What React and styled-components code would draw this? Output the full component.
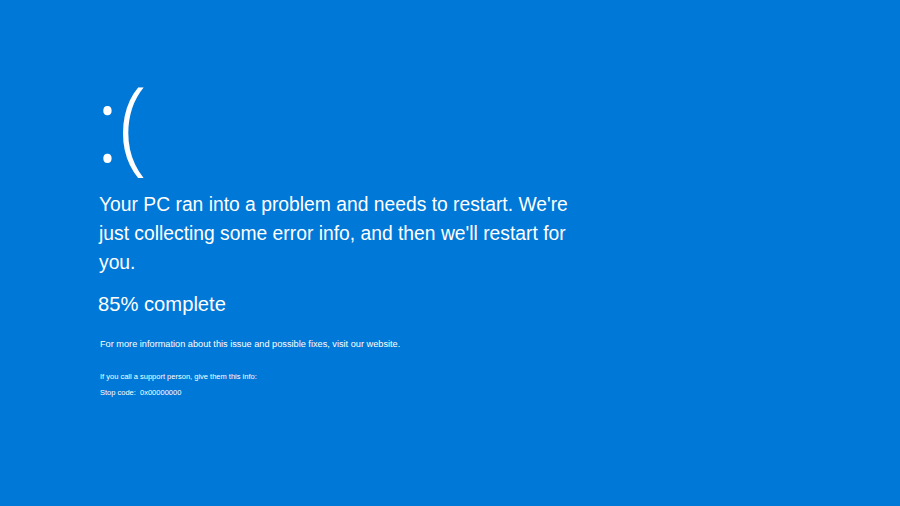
import React from "react";
import styled, { createGlobalStyle } from "styled-components";

const Global = createGlobalStyle`
  html, body {
    margin: 0;
    padding: 0;
    background: #0078d7;
  }
  body {
    font-family: "Liberation Sans", Arial, sans-serif;
    color: #ffffff;
  }
`;

const Screen = styled.main`
  width: 900px;
  height: 506px;
  background: #0078d7;
  box-sizing: border-box;
  padding: 70px 0 0 99px;
  overflow: hidden;
`;

const Face = styled.div`
  font-family: "Open Sans", "Liberation Sans", sans-serif;
  font-weight: 300;
  font-size: 104px;
  line-height: 104px;
  height: 120px;
  margin-left: -4px;
  letter-spacing: -1px;
`;

const Message = styled.p`
  margin: 0;
  width: 480px;
  font-size: 19.3px;
  line-height: 29px;
`;

const Progress = styled.p`
  margin: 14px 0 0 -1px;
  font-size: 20.2px;
  line-height: 26px;
`;

const Info = styled.p`
  margin: ${(p) => p.$top}px 0 0 1px;
  font-size: ${(p) => p.$size}px;
  line-height: ${(p) => p.$size + 4}px;
`;

const App = () => (
  <>
    <Global />
    <Screen>
      <Face>:(</Face>
      <Message>
        Your PC ran into a problem and needs to restart. We're just collecting
        some error info, and then we'll restart for you.
      </Message>
      <Progress>85% complete</Progress>
      <Info $top={21} $size={9.2}>
        For more information about this issue and possible fixes, visit our
        website.
      </Info>
      <Info $top={20} $size={7.5}>
        If you call a support person, give them this info:
      </Info>
      <Info $top={4} $size={7.5}>
        Stop code:&nbsp; 0x00000000
      </Info>
    </Screen>
  </>
);

export default App;
